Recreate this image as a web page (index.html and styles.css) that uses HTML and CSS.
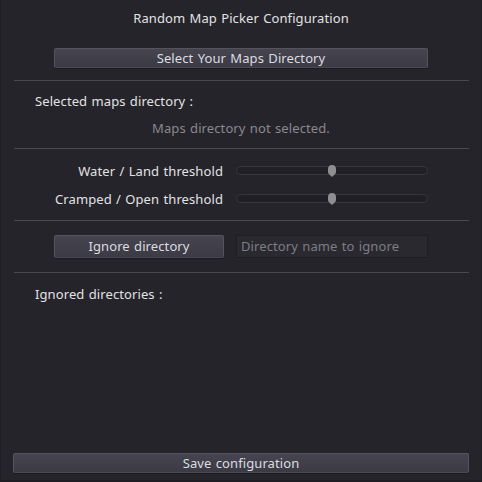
FILE: index.html
```html
<!DOCTYPE html>
<html>
<head>
<meta charset="utf-8">
<link rel="stylesheet" href="styles.css">
</head>
<body>
<div class="panel">
  <div class="title">Random Map Picker Configuration</div>
  <div class="center-col">
    <button class="btn btn-wide">Select Your Maps Directory</button>
  </div>
  <div class="sep sep-1"></div>
  <div class="label label-selected">Selected maps directory :</div>
  <div class="hint">Maps directory not selected.</div>
  <div class="sep sep-2"></div>
  <div class="grid grid-sliders">
    <div class="slabel">Water / Land threshold</div>
    <div class="slider"><div class="track"></div><svg class="grab" style="left: 50%" width="8" height="12" viewBox="0 0 8 12"><path d="M4 0 C6.5 0 8 1.5 8 4 L8 7 C8 9 5.5 10.5 4 12 C2.5 10.5 0 9 0 7 L0 4 C0 1.5 1.5 0 4 0 Z" fill="#8f8f91"/></svg></div>
    <div class="slabel">Cramped / Open threshold</div>
    <div class="slider"><div class="track"></div><svg class="grab" style="left: 50%" width="8" height="12" viewBox="0 0 8 12"><path d="M4 0 C6.5 0 8 1.5 8 4 L8 7 C8 9 5.5 10.5 4 12 C2.5 10.5 0 9 0 7 L0 4 C0 1.5 1.5 0 4 0 Z" fill="#8f8f91"/></svg></div>
  </div>
  <div class="sep sep-3"></div>
  <div class="grid grid-ignore">
    <button class="btn btn-ignore">Ignore directory</button>
    <div class="input">Directory name to ignore</div>
  </div>
  <div class="sep sep-4"></div>
  <div class="label label-ignored">Ignored directories :</div>
  <div class="spacer"></div>
  <div class="bottom">
    <button class="btn btn-save">Save configuration</button>
  </div>
</div>
</body>
</html>
```
FILE: styles.css
```css
* { box-sizing: border-box; }
html, body { margin: 0; padding: 0; background: #1e1d23; }
body {
  font-family: "Noto Sans", "Open Sans", "DejaVu Sans", sans-serif;
  font-size: 13px;
  letter-spacing: 0.1px;
  word-spacing: 0.8px;
  color: #e2e2e4;
}
.panel {
  width: 482px;
  height: 482px;
  background: #25242a;
  border-left: 1px solid #1f1e24;
  border-right: 1px solid #1f1e24;
  border-bottom: 2px solid #1f1e24;
  display: flex;
  flex-direction: column;
}
.title {
  height: 36px;
  line-height: 36px;
  text-align: center;
}
.center-col {
  margin-top: 12px;
  padding: 0 53px;
}
.btn {
  font-family: inherit;
  font-size: 13px;
  letter-spacing: inherit;
  word-spacing: inherit;
  color: #dcdce0;
  border: 1px solid #55545d;
  border-bottom-color: #4a4952;
  border-radius: 2px;
  background: linear-gradient(#45444f, #3b3a45);
  padding: 0;
  margin: 0;
  display: block;
  width: 100%;
  box-shadow: 0 1px 0 #1c1b20;
}
.btn-wide { height: 20px; line-height: 18px; }
.sep {
  height: 1px;
  background: #4a4950;
  margin-left: 13px;
  margin-right: 12px;
}
.sep-1 { margin-top: 12px; }
.label { height: 20px; line-height: 20px; padding-left: 34px; }
.label-selected { margin-top: 10px; }
.hint {
  margin-top: 7px;
  height: 20px;
  line-height: 20px;
  text-align: center;
  color: #8a898f;
}
.sep-2 { margin-top: 10px; }
.grid {
  display: grid;
  grid-template-columns: 170px 1fr;
  column-gap: 12px;
  padding-left: 53px;
  padding-right: 53px;
}
.grid-sliders { margin-top: 12px; row-gap: 8px; }
.slabel { height: 20px; line-height: 20px; text-align: right; padding-right: 1px; }
.slider { position: relative; height: 20px; }
.track {
  position: absolute;
  left: 0; right: 0;
  top: 5px;
  height: 9px;
  border: 1px solid #38373e;
  border-radius: 5px;
  background: #201f25;
}
.grab {
  position: absolute;
  top: 4px;
  margin-left: -4px;
  display: block;
}
.sep-3 { margin-top: 11px; }
.grid-ignore { margin-top: 14px; }
.btn-ignore { height: 23px; line-height: 21px; }
.input {
  height: 23px;
  line-height: 20px;
  border: 1px solid #1f1e24;
  background: #2a2930;
  color: #7e7d84;
  padding-left: 4px;
}
.sep-4 { margin-top: 14px; }
.label-ignored { margin-top: 11px; }
.spacer { flex: 1; }
.bottom { padding: 0 12px 7px 12px; }
.btn-save { height: 20px; line-height: 18px; }
```
